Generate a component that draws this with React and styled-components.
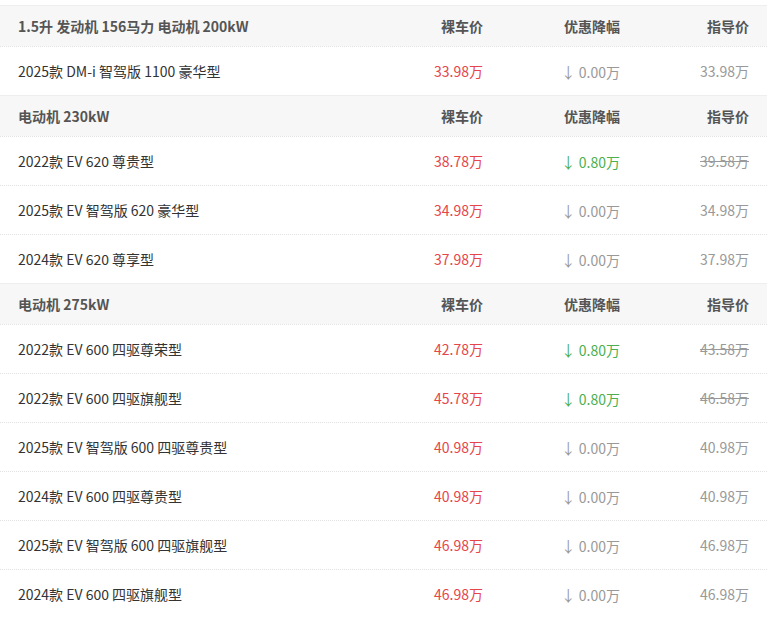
import React from 'react'
import styled, { createGlobalStyle } from 'styled-components'

const Global = createGlobalStyle`
body { margin: 0; background: #fff; font-family: "Microsoft YaHei", "Noto Sans CJK SC", sans-serif; }
`;

const groups = [
  { title: '1.5升 发动机 156马力 电动机 200kW', rows: [
    ['2025款 DM-i 智驾版 1100 豪华型', '33.98', null, '33.98'],
  ]},
  { title: '电动机 230kW', rows: [
    ['2022款 EV 620 尊贵型', '38.78', '0.80', '39.58'],
    ['2025款 EV 智驾版 620 豪华型', '34.98', null, '34.98'],
    ['2024款 EV 620 尊享型', '37.98', null, '37.98'],
  ]},
  { title: '电动机 275kW', rows: [
    ['2022款 EV 600 四驱尊荣型', '42.78', '0.80', '43.58'],
    ['2022款 EV 600 四驱旗舰型', '45.78', '0.80', '46.58'],
    ['2025款 EV 智驾版 600 四驱尊贵型', '40.98', null, '40.98'],
    ['2024款 EV 600 四驱尊贵型', '40.98', null, '40.98'],
    ['2025款 EV 智驾版 600 四驱旗舰型', '46.98', null, '46.98'],
    ['2024款 EV 600 四驱旗舰型', '46.98', null, '46.98'],
  ]},
];

const App = () => (
  <Page>
    <Global />
    {groups.map(g => (
      <React.Fragment key={g.title}>
        <Head>
          <span>{g.title}</span>
          <Cell>裸车价</Cell>
          <Cell>优惠降幅</Cell>
          <Cell>指导价</Cell>
        </Head>
        {g.rows.map(r => (
          <Row key={r[0]}>
            <span>{r[0]}</span>
            <Price>{r[1]}万</Price>
            <Drop $on={!!r[2]}><Arrow>↓</Arrow> {r[2] || '0.00'}万</Drop>
            <Guide $struck={!!r[2]}>{r[3]}万</Guide>
          </Row>
        ))}
      </React.Fragment>
    ))}
  </Page>
);

const Page = styled.div`
  padding-top: 5px;
  font-size: 14px;
  color: #333;
`;

const Grid = styled.div`
  display: grid;
  grid-template-columns: 1fr 120px 137px 129px;
  align-items: center;
  padding: 0 18px;
`;

const Head = styled(Grid)`
  height: 40px;
  background: #f7f7f7;
  font-weight: bold;
  color: #555;
  border-top: 1px solid #eee;
`;

const Row = styled(Grid)`
  height: 48px;
  border-top: 1px dotted #e2e2e2;
  color: #333;
`;

const Cell = styled.span`
  text-align: right;
`;

const Price = styled(Cell)`
  color: #e6454a;
`;

const Drop = styled(Cell)`
  color: ${p => (p.$on ? '#4caf50' : '#999')};
`;

const Arrow = styled.span`
  font-size: 15px;
`;

const Guide = styled(Cell)`
  color: #999;
  text-decoration: ${p => (p.$struck ? 'line-through' : 'none')};
`;

export default App
